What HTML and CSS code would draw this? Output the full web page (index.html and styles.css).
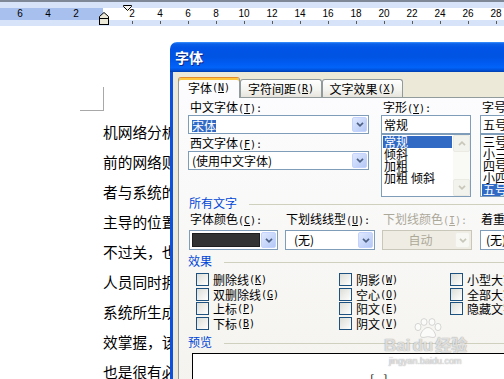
FILE: index.html
```html
<!DOCTYPE html>
<html lang="zh-CN">
<head>
<meta charset="utf-8">
<title>字体</title>
<link rel="stylesheet" href="styles.css">
</head>
<body>
<div class="ruler">
  <div class="ruler-strip">
    <span class="rn">6</span><span class="rn">4</span><span class="rn">2</span><span class="rn"></span><span class="rn">2</span><span class="rn">4</span><span class="rn">6</span><span class="rn">8</span><span class="rn">10</span><span class="rn">12</span><span class="rn">14</span><span class="rn">16</span><span class="rn">18</span><span class="rn">20</span><span class="rn">22</span><span class="rn">24</span><span class="rn">26</span><span class="rn">28</span>
  </div>
  <div class="ruler-ticks">
    <span class="rt"></span><span class="rt"></span><span class="rt"></span><span class="rt"></span><span class="rt"></span><span class="rt"></span><span class="rt"></span><span class="rt"></span><span class="rt"></span><span class="rt"></span><span class="rt"></span><span class="rt"></span><span class="rt"></span><span class="rt"></span>
  </div>
  <svg class="markers" width="140" height="26" viewBox="0 0 140 26">
    <polygon points="123.5,5.5 131.5,5.5 131.5,6.5 127.5,10.5 123.5,6.5" fill="#f4f3ee" stroke="#000" stroke-width="1"/>
    <polygon points="99.5,18.5 99.5,16.5 104,12.5 108.5,16.5 108.5,18.5" fill="#ece9d8" stroke="#000" stroke-width="1"/>
    <rect x="99.5" y="18.5" width="9" height="6" fill="#ece9d8" stroke="#000" stroke-width="1"/>
  </svg>
</div>

<div class="doc">
  <div class="corner"></div>
  <div class="text">
    <p>机网络分析仪能够对网络中的数据包进行捕获和分析</p>
    <p>前的网络则更加复杂多样，需要更多的工具</p>
    <p>者与系统的交互方式也发生了变化</p>
    <p>主导的位置已经被新的技术所取代</p>
    <p>不过关，也会影响到整个系统的运行</p>
    <p>人员同时拥有多种技能是非常重要的</p>
    <p>系统所生成的日志文件需要定期检查</p>
    <p>效掌握，该系统的各项功能和参数</p>
    <p>也是很有必要的</p>
  </div>
</div>

<div class="dialog">
  <div class="titlebar">字体</div>
  <div class="dbody">
    <div class="tabs">
      <div class="tab active t1">字体<span class="k">(<u>N</u>)</span></div>
      <div class="tab t2">字符间距<span class="k">(<u>R</u>)</span></div>
      <div class="tab t3">文字效果<span class="k">(<u>X</u>)</span></div>
    </div>
    <div class="panel">
      <div class="top">
        <div class="col1">
          <div class="lbl">中文字体<span class="k">(<u>T</u>):</span></div>
          <div class="combo">
            <span class="val"><span class="hl">宋体</span></span>
            <span class="dd"><svg width="8" height="5" viewBox="0 0 8 5"><path d="M1 0.8l3 3 3-3" fill="none" stroke="#4d6185" stroke-width="1.7"/></svg></span>
          </div>
          <div class="lbl l2">西文字体<span class="k">(<u>F</u>):</span></div>
          <div class="combo">
            <span class="val">(使用中文字体)</span>
            <span class="dd"><svg width="8" height="5" viewBox="0 0 8 5"><path d="M1 0.8l3 3 3-3" fill="none" stroke="#4d6185" stroke-width="1.7"/></svg></span>
          </div>
        </div>
        <div class="col2">
          <div class="lbl">字形<span class="k">(<u>Y</u>):</span></div>
          <div class="edit">常规</div>
          <div class="list">
            <div class="items">
              <div class="item sel">常规</div>
              <div class="item">倾斜</div>
              <div class="item">加粗</div>
              <div class="item">加粗<span class="gap"></span>倾斜</div>
            </div>
            <div class="vscroll">
              <span class="sbtn"><svg width="8" height="5" viewBox="0 0 8 5"><path d="M1 4.2l3-3 3 3" fill="none" stroke="#c9c7ba" stroke-width="1.7"/></svg></span>
              <span class="sbtn"><svg width="8" height="5" viewBox="0 0 8 5"><path d="M1 0.8l3 3 3-3" fill="none" stroke="#c9c7ba" stroke-width="1.7"/></svg></span>
            </div>
          </div>
        </div>
        <div class="col3">
          <div class="lbl">字号<span class="k">(<u>S</u>):</span></div>
          <div class="edit">五号</div>
          <div class="list">
            <div class="items">
              <div class="item">三号</div>
              <div class="item">小三</div>
              <div class="item">四号</div>
              <div class="item">小四</div>
              <div class="item sel">五号</div>
            </div>
          </div>
        </div>
      </div>

      <div class="sec s1">所有文字</div>
      <div class="row2">
        <div class="f f1">
          <div class="lbl">字体颜色<span class="k">(<u>C</u>):</span></div>
          <div class="combo">
            <span class="swatch"></span>
            <span class="dd"><svg width="8" height="5" viewBox="0 0 8 5"><path d="M1 0.8l3 3 3-3" fill="none" stroke="#4d6185" stroke-width="1.7"/></svg></span>
          </div>
        </div>
        <div class="f f2">
          <div class="lbl">下划线线型<span class="k">(<u>U</u>):</span></div>
          <div class="combo">
            <span class="val v2">(无)</span>
            <span class="dd"><svg width="8" height="5" viewBox="0 0 8 5"><path d="M1 0.8l3 3 3-3" fill="none" stroke="#4d6185" stroke-width="1.7"/></svg></span>
          </div>
        </div>
        <div class="f f3">
          <div class="lbl gray">下划线颜色<span class="k">(<u>I</u>):</span></div>
          <div class="combo dis">
            <span class="val">自动</span>
            <span class="dd"><svg width="8" height="5" viewBox="0 0 8 5"><path d="M1 0.8l3 3 3-3" fill="none" stroke="#c9c7ba" stroke-width="1.7"/></svg></span>
          </div>
        </div>
        <div class="f f4">
          <div class="lbl">着重号<span class="k">(·):</span></div>
          <div class="combo">
            <span class="val v4">(无)</span>
          </div>
        </div>
      </div>

      <div class="sec s2">效果</div>
      <div class="checks">
        <div class="chk"><span class="box"></span>删除线<span class="k">(<u>K</u>)</span></div>
        <div class="chk"><span class="box"></span>双删除线<span class="k">(<u>G</u>)</span></div>
        <div class="chk"><span class="box"></span>上标<span class="k">(<u>P</u>)</span></div>
        <div class="chk"><span class="box"></span>下标<span class="k">(<u>B</u>)</span></div>
        <div class="chk"><span class="box"></span>阴影<span class="k">(<u>W</u>)</span></div>
        <div class="chk"><span class="box"></span>空心<span class="k">(<u>O</u>)</span></div>
        <div class="chk"><span class="box"></span>阳文<span class="k">(<u>E</u>)</span></div>
        <div class="chk"><span class="box"></span>阴文<span class="k">(<u>V</u>)</span></div>
        <div class="chk"><span class="box"></span>小型大写字母<span class="k">(<u>M</u>)</span></div>
        <div class="chk"><span class="box"></span>全部大写字母<span class="k">(<u>A</u>)</span></div>
        <div class="chk"><span class="box"></span>隐藏文字<span class="k">(<u>H</u>)</span></div>
      </div>

      <div class="sec s2">预览</div>
      <div class="preview"><span class="pv">[ - ]</span></div>
    </div>
  </div>
</div>

<div class="wm">
  <svg class="paw" width="32" height="20" viewBox="0 0 32 20">
    <ellipse cx="6" cy="9" rx="3" ry="3.6"/>
    <ellipse cx="12" cy="4" rx="3" ry="3.4"/>
    <ellipse cx="20" cy="4" rx="3" ry="3.4"/>
    <ellipse cx="26" cy="9" rx="3" ry="3.6"/>
    <path d="M16 9.5c-4 0-7.5 5.5-7.5 8 0 1.8 2 2.2 4 1.8 2-.4 2.3-.6 3.5-.6s1.5.2 3.5.6c2 .4 4 0 4-1.8 0-2.5-3.5-8-7.5-8z"/>
  </svg>
  <div class="wm-logo">Bai<span class="du">du</span><span class="jy">经验</span></div>
  <div class="wm-url">jingyan.baidu.com</div>
</div>
</body>
</html>
```

FILE: styles.css
```css
* { box-sizing: border-box; }
html, body { margin: 0; padding: 0; }
body {
  width: 504px;
  height: 379px;
  overflow: hidden;
  position: relative;
  background: #fff;
  color: #000;
  font-family: "Noto Sans CJK SC", "Noto Sans", sans-serif;
}

/* ---------- ruler ---------- */
.ruler {
  height: 26px;
  border-top: 2px solid #7f8896;
  padding-top: 6px;
  background: #d7e3f8;
  position: relative;
}
.ruler-strip {
  height: 12px;
  display: flex;
  padding-left: 6px;
  background: linear-gradient(to right, #a8c0ee 0, #a8c0ee 103px, #fff 103px);
}
.rn {
  flex: none;
  width: 28px;
  text-align: center;
  font: 10px/12px "Liberation Sans", Arial, sans-serif;
}
.ruler-ticks {
  height: 6px;
  display: flex;
  padding-left: 118px;
}
.rt {
  flex: none;
  width: 28px;
  display: flex;
  justify-content: center;
  padding-top: 1px;
}
.rt::before {
  content: "";
  width: 1px;
  height: 3px;
  background: #5a5a5a;
}
.markers {
  position: absolute;
  left: 0;
  top: -2px;
}

/* ---------- document ---------- */
.doc { padding-left: 80px; }
.corner {
  width: 24px;
  height: 24px;
  margin-top: 61px;
  border-right: 1px solid #a8a8a8;
  border-bottom: 1px solid #a8a8a8;
}
.text {
  margin-top: 6px;
  padding-left: 23px;
  font-size: 14.7px;
  line-height: 30px;
  white-space: nowrap;
}
.text p { margin: 0; }

/* ---------- dialog ---------- */
.dialog {
  position: absolute;
  left: 170px;
  top: 42px;
  width: 345px;
  height: 345px;
  display: flex;
  flex-direction: column;
  font-size: 12px;
  line-height: 14px;
}
.titlebar {
  flex: none;
  height: 30px;
  border-radius: 7px 7px 0 0;
  background: linear-gradient(180deg, #3d95ff 0, #0a5fe8 6%, #0053e6 20%, #0054e3 50%, #005bf2 70%, #0263f8 85%, #0050d8 94%, #003dac 100%);
  color: #fff;
  font-weight: bold;
  font-size: 14px;
  display: flex;
  align-items: center;
  padding-left: 5px;
  text-shadow: 1px 1px 0 #0c2a8a;
}
.dbody {
  flex: 1;
  display: flex;
  flex-direction: column;
  background: #ece9d8;
  border-left: 3px solid #0b50de;
  padding: 5px 0 0 5px;
}
.k {
  font-family: "DejaVu Sans Mono", "Liberation Mono", monospace;
  font-size: 10px;
}
.tabs {
  flex: none;
  display: flex;
  align-items: flex-end;
  height: 21px;
  margin-bottom: -1px;
  position: relative;
  z-index: 1;
}
.tab {
  flex: none;
  height: 18px;
  margin-bottom: 1px;
  border: 1px solid #919b9c;
  border-bottom: 0;
  border-radius: 3px 3px 0 0;
  background: linear-gradient(#fff, #f3f3ef 60%, #e6e4dc);
  display: flex;
  align-items: center;
  justify-content: center;
  white-space: nowrap;
}
.tab.active {
  height: 21px;
  margin-bottom: 0;
  background: #fcfcfe;
  border-top: 1px solid #e68b2c;
  box-shadow: inset 0 2px 0 #ffc73c;
}
.t1 { width: 62px; }
.t2 { width: 82px; }
.t3 { width: 81px; }

.panel {
  flex: 1;
  border-top: 1px solid #919b9c;
  border-left: 1px solid #919b9c;
  background: linear-gradient(#fcfcfe, #f4f3ee);
  padding: 2px 0 0 9px;
}
.top { display: flex; height: 96px; }
.col1 { flex: none; width: 181px; margin-right: 12px; }
.col2 { flex: none; width: 90px; margin-right: 9px; }
.col3 { flex: none; width: 90px; }

.lbl {
  height: 14px;
  line-height: 14px;
  padding-left: 2px;
  white-space: nowrap;
}
.l2 { margin-top: 2px; }
.gray { color: #aca899; }

.combo {
  height: 19px;
  margin-top: 1px;
  border: 1px solid #7f9db9;
  background: #fff;
  display: flex;
  align-items: center;
}
.val {
  flex: 1;
  padding-left: 3px;
  white-space: nowrap;
  line-height: 14px;
}
.hl {
  display: inline-block;
  vertical-align: middle;
  height: 12px;
  line-height: 12px;
  background: #316ac5;
  color: #fff;
}
.dd {
  flex: none;
  align-self: stretch;
  width: 15px;
  margin: 1px 1px 1px auto;
  border: 1px solid #c3d3fd;
  border-radius: 2px;
  background: linear-gradient(135deg, #dfe8fe, #b4c8f6);
  display: flex;
  align-items: center;
  justify-content: center;
}
.dd svg, .sbtn svg { display: block; }

.edit {
  height: 19px;
  margin-top: 1px;
  border: 1px solid #7f9db9;
  background: #fff;
  padding-left: 2px;
  line-height: 17px;
  white-space: nowrap;
}
.list {
  height: 63px;
  border: 1px solid #7f9db9;
  background: #fff;
  display: flex;
}
.items { flex: 1; padding: 1px 1px 0; }
.item {
  height: 12px;
  line-height: 12px;
  padding-left: 1px;
  white-space: nowrap;
}
.item.sel { background: #316ac5; color: #fff; }
.gap { display: inline-block; width: 3px; }
.vscroll {
  flex: none;
  width: 17px;
  display: flex;
  flex-direction: column;
  justify-content: space-between;
  background: #f9f9f6;
}
.sbtn {
  height: 17px;
  border: 1px solid #ebeae3;
  border-radius: 2px;
  background: #f3f3ee;
  display: flex;
  align-items: center;
  justify-content: center;
}

/* section headers */
.sec {
  display: flex;
  align-items: flex-start;
  height: 14px;
  line-height: 14px;
  color: #0046d5;
  white-space: nowrap;
}
.sec::after {
  content: "";
  flex: 1;
  height: 1px;
  margin: 8px 0 0 12px;
  background: #d0d0bf;
}
.s1 { padding-left: 1px; }
.s2 { margin-top: 4px; }

.row2 { display: flex; margin-top: 2px; }
.f { flex: none; }
.f1 { width: 89px; margin-left: 1px; margin-right: 7px; }
.f2 { width: 90px; margin-right: 7px; }
.f3 { width: 90px; margin-right: 8px; }
.f4 { width: 90px; }
.f .lbl { padding-left: 1px; }
.f .combo { height: 20px; margin-top: 4px; }
.swatch {
  flex: none;
  width: 68px;
  height: 14px;
  margin-left: 2px;
  background: #333;
  border: 1px solid #1e1e1e;
}
.v2 { padding-left: 8px; }
.v4 { padding-left: 5px; }
.combo.dis { border-color: #c9c7ba; background: #efede3; }
.combo.dis .val { color: #aca899; text-align: center; }
.combo.dis .dd { background: #f7f7f3; border-color: #eeede6; }

/* checkboxes */
.checks {
  display: grid;
  grid-template-columns: 143px 111px 120px;
  grid-template-rows: repeat(4, 13px);
  grid-auto-flow: column;
  row-gap: 1.67px;
  margin: 5px 0 0 8px;
}
.chk {
  display: flex;
  align-items: center;
  white-space: nowrap;
  line-height: 13px;
}
.box {
  flex: none;
  width: 13px;
  height: 13px;
  margin-right: 4px;
  border: 1px solid #1c5180;
  background: linear-gradient(135deg, #dcdcd7, #fff);
}
.checks + .sec { margin-top: 5px; }

.preview {
  height: 40px;
  margin: 4px 0 0 4px;
  border: 1px solid #000;
  background: #fff;
  padding: 19px 0 0 177px;
  line-height: 12px;
}

/* watermark */
.wm {
  position: absolute;
  left: 384px;
  top: 318px;
  width: 92px;
  display: flex;
  flex-direction: column;
  align-items: flex-start;
  color: rgba(255, 255, 255, 0.7);
  text-shadow: 0 0 1px rgba(110, 110, 110, 0.6), 0 0 1px rgba(110, 110, 110, 0.4);
  pointer-events: none;
}
.paw {
  margin-left: 28px;
  fill: rgba(255, 255, 255, 0.6);
  stroke: rgba(140, 140, 140, 0.4);
  stroke-width: 0.8;
}
.wm-logo {
  margin-top: -2px;
  font: bold 17px/17px "Liberation Sans", Arial, sans-serif;
  white-space: nowrap;
}
.wm-logo .du { margin-left: 2px; }
.wm-logo .jy {
  margin-left: 2px;
  font-family: "Noto Sans CJK SC", sans-serif;
  font-size: 16px;
}
.wm-url {
  margin: 2px 0 0 5px;
  font: 9px/10px "Liberation Sans", Arial, sans-serif;
  white-space: nowrap;
}
```
